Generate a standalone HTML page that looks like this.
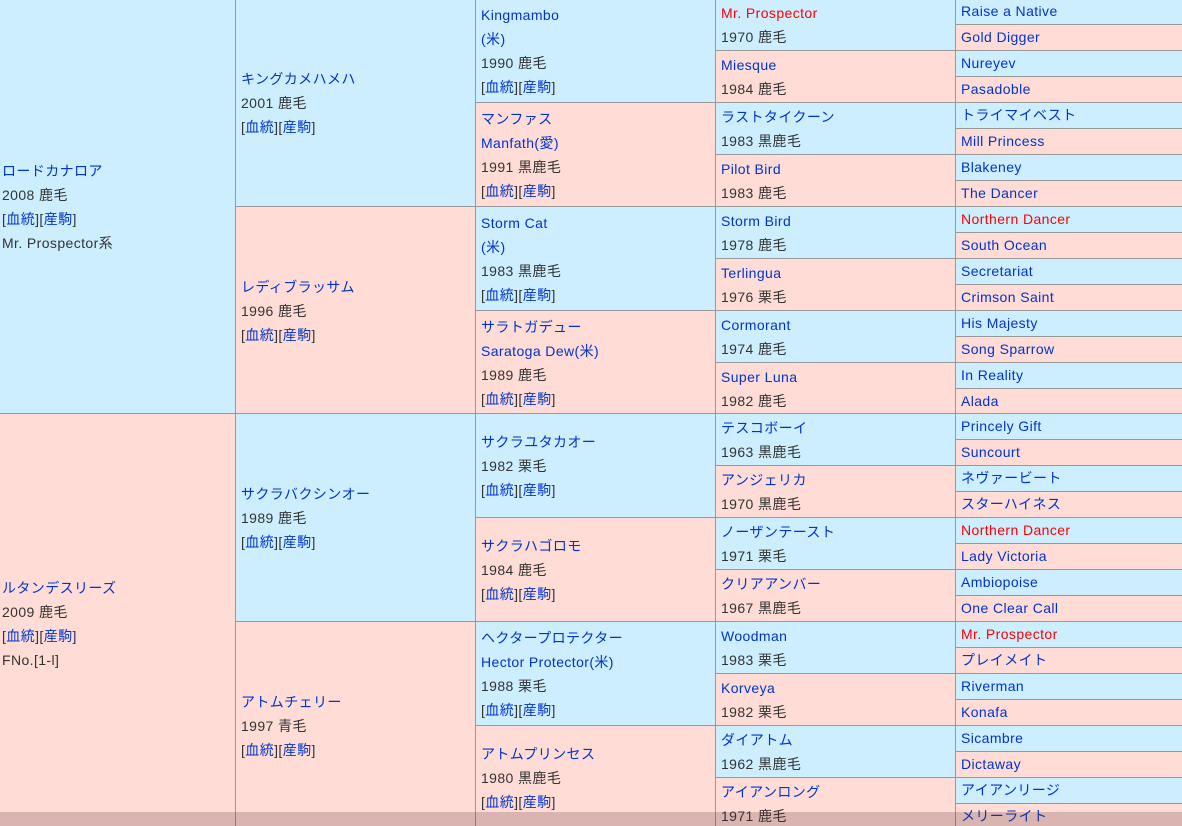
<!DOCTYPE html>
<html><head><meta charset="utf-8"><style>
html,body{margin:0;width:1182px;height:826px;overflow:hidden}
body{position:relative;font-family:"Liberation Sans","Noto Sans CJK JP",sans-serif;font-size:14px;color:#333;background:#fff;letter-spacing:0.4px}
.c{position:absolute;box-sizing:border-box;border-top:1px solid #999;border-left:1px solid #999;display:flex;flex-direction:column;justify-content:center;line-height:24px;padding-left:5px;white-space:nowrap;overflow:hidden}
.b{background:#cceeff}.p{background:#ffdcd6}
.c1{left:0;width:235px;height:416px;border-left:none;padding-left:2px}
.c2{left:235px;width:240px;height:208px}
.c3{left:475px;width:240px;height:104px}
.c4{left:715px;width:240px;height:52px}
.c5{left:955px;width:227px;height:26px;line-height:25px}
a{color:#0033cc;text-decoration:none}
.r{color:#ff0000}
.ov{position:absolute;left:0;top:812px;width:1182px;height:14px;background:rgba(80,40,40,0.22)}
</style></head><body>
<div class="c c1 b" style="top:-2px"><span><a>ロードカナロア</a></span><span>2008 鹿毛</span><span>[<a>血統</a>][<a>産駒</a>]</span><span>Mr. Prospector系</span></div>
<div class="c c1 p" style="top:413px;height:420px"><span><a>ルタンデスリーズ</a></span><span>2009 鹿毛</span><span>[<a>血統</a>][<a>産駒</a>]</span><span>FNo.[1-l]</span></div>

<div class="c c2 b" style="top:-2px"><span><a>キングカメハメハ</a></span><span>2001 鹿毛</span><span>[<a>血統</a>][<a>産駒</a>]</span></div>
<div class="c c2 p" style="top:206px"><span><a>レディブラッサム</a></span><span>1996 鹿毛</span><span>[<a>血統</a>][<a>産駒</a>]</span></div>
<div class="c c2 b" style="top:413px"><span><a>サクラバクシンオー</a></span><span>1989 鹿毛</span><span>[<a>血統</a>][<a>産駒</a>]</span></div>
<div class="c c2 p" style="top:621px"><span><a>アトムチェリー</a></span><span>1997 青毛</span><span>[<a>血統</a>][<a>産駒</a>]</span></div>

<div class="c c3 b" style="top:-2px"><span><a>Kingmambo</a></span><span><a>(米)</a></span><span>1990 鹿毛</span><span>[<a>血統</a>][<a>産駒</a>]</span></div>
<div class="c c3 p" style="top:102px"><span><a>マンファス</a></span><span><a>Manfath(愛)</a></span><span>1991 黒鹿毛</span><span>[<a>血統</a>][<a>産駒</a>]</span></div>
<div class="c c3 b" style="top:206px"><span><a>Storm Cat</a></span><span><a>(米)</a></span><span>1983 黒鹿毛</span><span>[<a>血統</a>][<a>産駒</a>]</span></div>
<div class="c c3 p" style="top:310px"><span><a>サラトガデュー</a></span><span><a>Saratoga Dew(米)</a></span><span>1989 鹿毛</span><span>[<a>血統</a>][<a>産駒</a>]</span></div>
<div class="c c3 b" style="top:413px"><span><a>サクラユタカオー</a></span><span>1982 栗毛</span><span>[<a>血統</a>][<a>産駒</a>]</span></div>
<div class="c c3 p" style="top:517px"><span><a>サクラハゴロモ</a></span><span>1984 鹿毛</span><span>[<a>血統</a>][<a>産駒</a>]</span></div>
<div class="c c3 b" style="top:621px"><span><a>ヘクタープロテクター</a></span><span><a>Hector Protector(米)</a></span><span>1988 栗毛</span><span>[<a>血統</a>][<a>産駒</a>]</span></div>
<div class="c c3 p" style="top:725px"><span><a>アトムプリンセス</a></span><span>1980 黒鹿毛</span><span>[<a>血統</a>][<a>産駒</a>]</span></div>

<div class="c c4 b" style="top:-2px"><span><a class="r">Mr. Prospector</a></span><span>1970 鹿毛</span></div>
<div class="c c4 p" style="top:50px"><span><a>Miesque</a></span><span>1984 鹿毛</span></div>
<div class="c c4 b" style="top:102px"><span><a>ラストタイクーン</a></span><span>1983 黒鹿毛</span></div>
<div class="c c4 p" style="top:154px"><span><a>Pilot Bird</a></span><span>1983 鹿毛</span></div>
<div class="c c4 b" style="top:206px"><span><a>Storm Bird</a></span><span>1978 鹿毛</span></div>
<div class="c c4 p" style="top:258px"><span><a>Terlingua</a></span><span>1976 栗毛</span></div>
<div class="c c4 b" style="top:310px"><span><a>Cormorant</a></span><span>1974 鹿毛</span></div>
<div class="c c4 p" style="top:362px"><span><a>Super Luna</a></span><span>1982 鹿毛</span></div>
<div class="c c4 b" style="top:413px"><span><a>テスコボーイ</a></span><span>1963 黒鹿毛</span></div>
<div class="c c4 p" style="top:465px"><span><a>アンジェリカ</a></span><span>1970 黒鹿毛</span></div>
<div class="c c4 b" style="top:517px"><span><a>ノーザンテースト</a></span><span>1971 栗毛</span></div>
<div class="c c4 p" style="top:569px"><span><a>クリアアンバー</a></span><span>1967 黒鹿毛</span></div>
<div class="c c4 b" style="top:621px"><span><a>Woodman</a></span><span>1983 栗毛</span></div>
<div class="c c4 p" style="top:673px"><span><a>Korveya</a></span><span>1982 栗毛</span></div>
<div class="c c4 b" style="top:725px"><span><a>ダイアトム</a></span><span>1962 黒鹿毛</span></div>
<div class="c c4 p" style="top:777px"><span><a>アイアンロング</a></span><span>1971 鹿毛</span></div>

<div class="c c5 b" style="top:-2px"><a>Raise a Native</a></div>
<div class="c c5 p" style="top:24px"><a>Gold Digger</a></div>
<div class="c c5 b" style="top:50px"><a>Nureyev</a></div>
<div class="c c5 p" style="top:76px"><a>Pasadoble</a></div>
<div class="c c5 b" style="top:102px"><a>トライマイベスト</a></div>
<div class="c c5 p" style="top:128px"><a>Mill Princess</a></div>
<div class="c c5 b" style="top:154px"><a>Blakeney</a></div>
<div class="c c5 p" style="top:180px"><a>The Dancer</a></div>
<div class="c c5 b" style="top:206px"><a class="r">Northern Dancer</a></div>
<div class="c c5 p" style="top:232px"><a>South Ocean</a></div>
<div class="c c5 b" style="top:258px"><a>Secretariat</a></div>
<div class="c c5 p" style="top:284px"><a>Crimson Saint</a></div>
<div class="c c5 b" style="top:310px"><a>His Majesty</a></div>
<div class="c c5 p" style="top:336px"><a>Song Sparrow</a></div>
<div class="c c5 b" style="top:362px"><a>In Reality</a></div>
<div class="c c5 p" style="top:388px"><a>Alada</a></div>
<div class="c c5 b" style="top:413px"><a>Princely Gift</a></div>
<div class="c c5 p" style="top:439px"><a>Suncourt</a></div>
<div class="c c5 b" style="top:465px"><a>ネヴァービート</a></div>
<div class="c c5 p" style="top:491px"><a>スターハイネス</a></div>
<div class="c c5 b" style="top:517px"><a class="r">Northern Dancer</a></div>
<div class="c c5 p" style="top:543px"><a>Lady Victoria</a></div>
<div class="c c5 b" style="top:569px"><a>Ambiopoise</a></div>
<div class="c c5 p" style="top:595px"><a>One Clear Call</a></div>
<div class="c c5 b" style="top:621px"><a class="r">Mr. Prospector</a></div>
<div class="c c5 p" style="top:647px"><a>プレイメイト</a></div>
<div class="c c5 b" style="top:673px"><a>Riverman</a></div>
<div class="c c5 p" style="top:699px"><a>Konafa</a></div>
<div class="c c5 b" style="top:725px"><a>Sicambre</a></div>
<div class="c c5 p" style="top:751px"><a>Dictaway</a></div>
<div class="c c5 b" style="top:777px"><a>アイアンリージ</a></div>
<div class="c c5 p" style="top:803px"><a>メリーライト</a></div>
<div class="ov"></div>
</body></html>
